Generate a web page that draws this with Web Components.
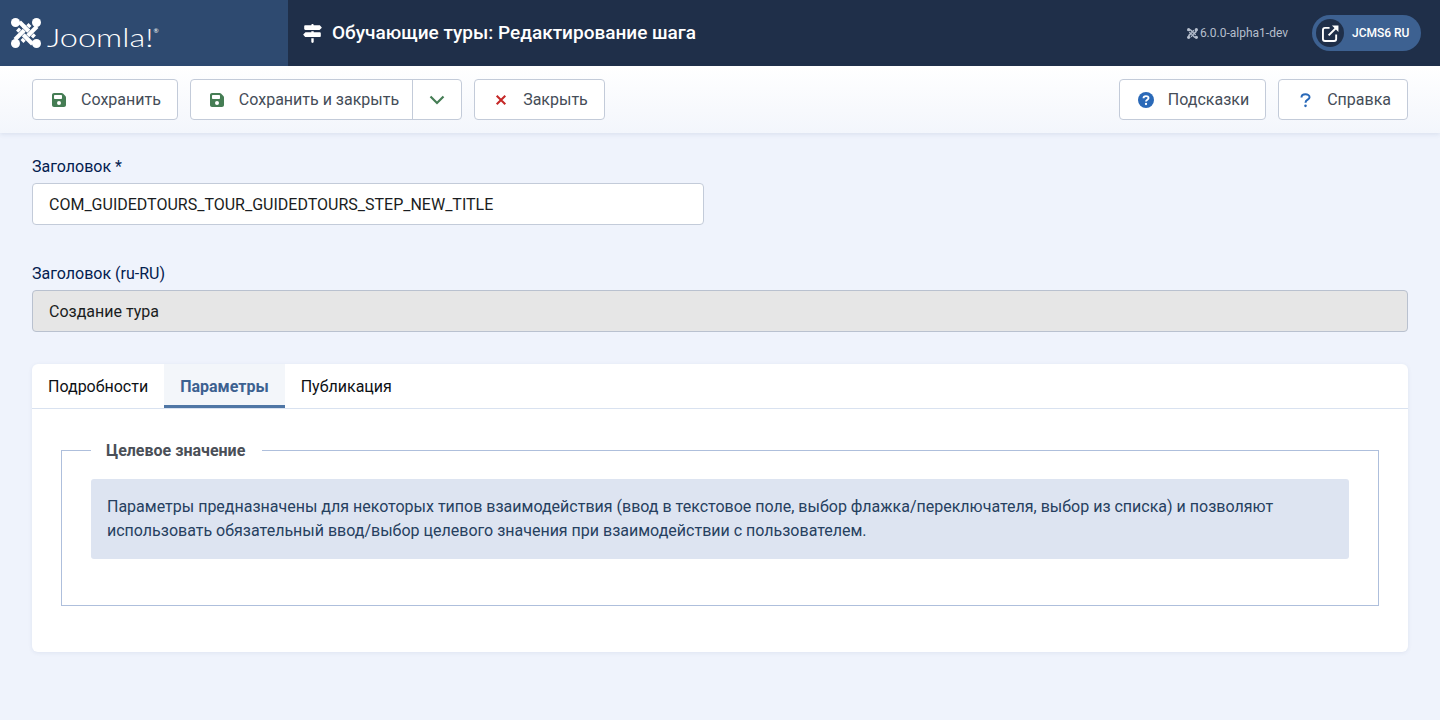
<!DOCTYPE html>
<html lang="ru">
<head>
<meta charset="utf-8">
<title>Обучающие туры</title>
<style>
  html, body { margin: 0; height: 100%; }
  body { background: #eff3fc; font-family: Roboto, "Liberation Sans", sans-serif; overflow: hidden; }
</style>
</head>
<body>

<template id="tpl-header">
  <style>
    :host { display: flex; height: 66px; background: #1f2f49; color: #fff; }
    .brand { width: 288px; box-sizing: border-box; padding: 0 0 0 11px; display: flex; align-items: center; background: #2e4a70; --knot-gap: #2e4a70; }
    .mark { width: 30px; height: 30px; flex: none; }
    .word { font-family: Lato, sans-serif; font-weight: 300; font-size: 26px; margin: 1px 0 0 6px; line-height: 30px; transform: scaleX(1.25); transform-origin: left; }
    .reg { font-size: 5px; vertical-align: 14px; font-weight: 400; }
    .title { flex: 1; display: flex; align-items: center; padding-left: 15px; }
    .sign { width: 19px; height: 19px; margin-right: 10px; }
    h1 { margin: 0; font-size: 19px; font-weight: 500; line-height: 24px; }
    .version { display: flex; align-items: center; font-size: 12px; color: #b6bfcd; margin-right: 24px; --knot-gap: #1f2f49; }
    .small { width: 11px; height: 11px; margin-right: 2px; }
    .pill { display: flex; align-items: center; height: 36px; width: 109px; box-sizing: border-box; margin: 15px 19px 0 0; padding-left: 4px; border-radius: 18px; background: #3d6191; font-size: 12px; font-weight: 500; }
    .circle { width: 28px; height: 28px; border-radius: 50%; background: #1f2f49; display: flex; align-items: center; justify-content: center; margin-right: 8px; }
    .ext { width: 17px; height: 17px; }
  </style>
  <div class="brand">
    <jm-icon class="mark" name="joomla"></jm-icon>
    <span class="word">Joomla!<span class="reg">®</span></span>
  </div>
  <div class="title"><jm-icon class="sign" name="post"></jm-icon><h1><slot></slot></h1></div>
  <div class="version"><jm-icon class="small" name="joomla"></jm-icon><slot name="version"></slot></div>
  <div class="pill"><span class="circle"><jm-icon class="ext" name="extlink"></jm-icon></span><slot name="site"></slot></div>
</template>

<template id="tpl-toolbar">
  <style>
    :host { display: flex; height: 67px; box-sizing: border-box; padding: 13px 32px 0; gap: 12px; background: linear-gradient(#fff, #f3f6fc); box-shadow: 0 1px 5px rgba(40, 70, 120, .12); position: relative; }
    .spacer { flex: 1; }
  </style>
  <slot name="left"></slot>
  <div class="spacer"></div>
  <slot name="right"></slot>
</template>

<template id="tpl-button">
  <style>
    :host { display: block; height: 41px; }
    .btn { display: flex; height: 41px; box-sizing: border-box; border: 1px solid #c3cbd9; border-radius: 4px; background: #fff; color: #454d58; font-size: 16px; line-height: 24px; }
    .main { display: flex; align-items: center; padding: 0 16px 0 18px; }
    .slot-ico { width: 16px; height: 16px; margin-right: 14px; display: flex; justify-content: center; align-items: center; color: var(--ico, #457d54); flex: none; }
    .slot-ico jm-icon { width: var(--ico-w, 14px); height: 16px; }
    .drop { display: none; width: 48px; border-left: 1px solid #c3cbd9; align-items: center; justify-content: center; color: #457d54; }
    .drop jm-icon { width: 16px; height: 10px; }
    :host([split]) .drop { display: flex; }
    :host([split]) .main { padding-right: 13px; }
  </style>
  <div class="btn">
    <div class="main"><span class="slot-ico"><jm-icon></jm-icon></span><slot></slot></div>
    <div class="drop"><jm-icon name="chev"></jm-icon></div>
  </div>
</template>

<template id="tpl-field">
  <style>
    :host { display: block; }
    label { display: block; font-size: 16px; line-height: 24px; color: #03204f; margin-bottom: 5px; position: relative; top: 1px; }
    .input { height: 42px; box-sizing: border-box; border: 1px solid #c3cbd9; border-radius: 4px; background: #fff; padding: 0 16px; display: flex; align-items: center; font-size: 16px; color: #1a1d21; }
    :host([readonly]) .input { background: #e6e6e6; border-color: #b9c1cf; }
  </style>
  <label></label>
  <div class="input"><slot></slot></div>
</template>

<template id="tpl-tabs">
  <style>
    :host { display: block; background: #fff; border-radius: 6px; box-shadow: 0 1px 4px rgba(40, 70, 120, .08); }
    .bar { display: flex; height: 45px; box-sizing: border-box; border-bottom: 1px solid #d9e2f0; }
    .panel { padding: 29px 29px 46px; }
  </style>
  <div class="bar"><slot name="tab"></slot></div>
  <div class="panel"><slot></slot></div>
</template>

<template id="tpl-tab">
  <style>
    :host { display: block; height: 44px; box-sizing: border-box; padding: 11px 16px 0; font-size: 16px; line-height: 24px; color: #0e1115; }
    :host([active]) { background: #f3f6fa; color: #3c6190; font-weight: 700; border-bottom: 3px solid #4f76a5; }
  </style>
  <slot></slot>
</template>

<template id="tpl-group">
  <style>
    :host { display: block; }
    fieldset { margin: 0; padding: 17px 29px 46px; border: 1px solid #aebfdc; }
    legend { padding: 1px 16px 0; height: 24px; box-sizing: content-box; margin-bottom: -1px; font-size: 16px; line-height: 24px; font-weight: 700; color: #4a4f57; position: relative; left: -1px; }
  </style>
  <fieldset><legend></legend><slot></slot></fieldset>
</template>

<template id="tpl-alert">
  <style>
    :host { display: block; background: #dde4f1; border-radius: 3px; padding: 16px; font-size: 16px; line-height: 24px; color: #26405f; }
  </style>
  <slot></slot>
</template>

<template id="tpl-page">
  <style>
    :host { display: block; padding: 21px 32px 0; }
    .stack { display: flex; flex-direction: column; }
    ::slotted(jm-field:nth-of-type(1)) { width: 672px; margin-bottom: 36px; }
    ::slotted(jm-field:nth-of-type(2)) { margin-bottom: 32px; }
  </style>
  <div class="stack"><slot></slot></div>
</template>

<jm-header>Обучающие туры: Редактирование шага
  <span slot="version">6.0.0-alpha1-dev</span>
  <span slot="site">JCMS6 RU</span>
</jm-header>

<jm-toolbar>
  <jm-button slot="left" icon="save">Сохранить</jm-button>
  <jm-button slot="left" icon="save" split>Сохранить и закрыть</jm-button>
  <jm-button slot="left" icon="xmark" color="#c52827" width="12px">Закрыть</jm-button>
  <jm-button slot="right" icon="circleq" color="#2a69b8" width="16px">Подсказки</jm-button>
  <jm-button slot="right" icon="quest" color="#2a69b8" width="11px">Справка</jm-button>
</jm-toolbar>

<jm-page>
  <jm-field label="Заголовок *">COM_GUIDEDTOURS_TOUR_GUIDEDTOURS_STEP_NEW_TITLE</jm-field>
  <jm-field label="Заголовок (ru-RU)" readonly>Создание тура</jm-field>
  <jm-tabs>
    <jm-tab slot="tab">Подробности</jm-tab>
    <jm-tab slot="tab" active>Параметры</jm-tab>
    <jm-tab slot="tab">Публикация</jm-tab>
    <jm-group legend="Целевое значение">
      <jm-alert>Параметры предназначены для некоторых типов взаимодействия (ввод в текстовое поле, выбор флажка/переключателя, выбор из списка) и позволяют использовать обязательный ввод/выбор целевого значения при взаимодействии с пользователем.</jm-alert>
    </jm-group>
  </jm-tabs>
</jm-page>

<script>
  // knot: four strands in a pinwheel, each with a dark casing so they look woven
  const STRAND = (d, w, c) => `<path d="${d}" fill="none" stroke="${c}" stroke-width="${w}"/>`;
  const GAP = 'var(--knot-gap, #2e4a70)';
  const KNOT_LINES = ['M17 8 L47 38', 'M52 17 L22 47', 'M43 52 L13 22', 'M8 43 L38 13'];
  const KNOT = KNOT_LINES.map(d => STRAND(d, 10, GAP) + STRAND(d, 8, 'currentColor')).join('')
    // the last strand goes under the first one
    + STRAND('M27 18 L33 24', 10, GAP) + STRAND('M25 16 L35 26', 8, 'currentColor');

  const ICONS = {
    joomla: `<svg viewBox="0 0 60 60">${KNOT}<g fill="currentColor">
        <circle cx="9" cy="9" r="9"/><circle cx="51" cy="9" r="9"/>
        <circle cx="9" cy="51" r="9"/><circle cx="51" cy="51" r="9"/>
      </g></svg>`,
    save: `<svg viewBox="0 0 448 512"><path fill="currentColor" d="M64 32C28.7 32 0 60.7 0 96V416c0 35.3 28.7 64 64 64H384c35.3 0 64-28.7 64-64V173.3c0-17-6.7-33.3-18.7-45.3L352 50.7C340 38.7 323.7 32 306.7 32H64zm0 96c0-17.7 14.3-32 32-32H288c17.7 0 32 14.3 32 32v64c0 17.7-14.3 32-32 32H96c-17.7 0-32-14.3-32-32V128zM224 288a64 64 0 1 1 0 128 64 64 0 1 1 0-128z"/></svg>`,
    post: `<svg viewBox="0 0 512 512"><path fill="currentColor" d="M224 32H64C46.3 32 32 46.3 32 64v64c0 17.7 14.3 32 32 32H441.4c4.2 0 8.3-1.7 11.3-4.7l48-48c6.2-6.2 6.2-16.4 0-22.6l-48-48c-3-3-7.1-4.7-11.3-4.7H288c0-17.7-14.3-32-32-32s-32 14.3-32 32zM480 256c0-17.7-14.3-32-32-32H288V192H224v32H70.6c-4.2 0-8.3 1.7-11.3 4.7l-48 48c-6.2 6.2-6.2 16.4 0 22.6l48 48c3 3 7.1 4.7 11.3 4.7H448c17.7 0 32-14.3 32-32V256zM288 480V384H224v96c0 17.7 14.3 32 32 32s32-14.3 32-32z"/></svg>`,
    xmark: `<svg viewBox="0 0 14 14"><path fill="none" stroke="currentColor" stroke-width="2.4" d="M2 2 L12 12 M12 2 L2 12"/></svg>`,
    chev: `<svg viewBox="0 0 16 10"><path fill="none" stroke="currentColor" stroke-width="2.2" d="M1.5 1.5 L8 8 L14.5 1.5"/></svg>`,
    circleq: `<svg viewBox="0 0 16 16"><circle cx="8" cy="8" r="8" fill="currentColor"/><path fill="none" stroke="#fff" stroke-width="1.9" d="M5.5 6.3 C5.5 3.4 10.5 3.4 10.5 6 C10.5 7.8 8 7.6 8 9.6"/><circle cx="8" cy="12" r="1.15" fill="#fff"/></svg>`,
    quest: `<svg viewBox="0 0 12 16"><path fill="none" stroke="currentColor" stroke-width="2.2" d="M1.6 5.2 C1.6 0.6 10.4 0.6 10.4 5 C10.4 7.8 6 7.6 6 11"/><circle cx="6" cy="14.4" r="1.4" fill="currentColor"/></svg>`,
    extlink: `<svg viewBox="0 0 18 18"><path fill="none" stroke="currentColor" stroke-width="2" d="M8 3 H3.2 C2 3 1 4 1 5.2 V14.8 C1 16 2 17 3.2 17 H12.8 C14 17 15 16 15 14.8 V10"/><path fill="none" stroke="currentColor" stroke-width="2.2" d="M7 11 L15.5 2.5"/><path fill="currentColor" d="M10.5 0.6 H17.4 V7.5 Z"/></svg>`
  };

  class JmBase extends HTMLElement {
    constructor() {
      super();
      let tpl = document.getElementById(this.constructor.tpl);
      this.attachShadow({ mode: 'open' }).appendChild(tpl.content.cloneNode(true));
    }
  }

  function simple(name, tpl) {
    customElements.define(name, class extends JmBase { static get tpl() { return tpl; } });
  }

  customElements.define('jm-icon', class extends HTMLElement {
    static get observedAttributes() { return ['name']; }
    constructor() {
      super();
      this.attachShadow({ mode: 'open' });
    }
    attributeChangedCallback() {
      this.shadowRoot.innerHTML = '<style>:host{display:block}svg{display:block;width:100%;height:100%}</style>' + (ICONS[this.getAttribute('name')] || '');
    }
  });

  simple('jm-header', 'tpl-header');
  simple('jm-toolbar', 'tpl-toolbar');
  simple('jm-tabs', 'tpl-tabs');
  simple('jm-tab', 'tpl-tab');
  simple('jm-alert', 'tpl-alert');
  simple('jm-page', 'tpl-page');

  customElements.define('jm-button', class extends JmBase {
    static get tpl() { return 'tpl-button'; }
    connectedCallback() {
      let ico = this.shadowRoot.querySelector('.slot-ico');
      ico.querySelector('jm-icon').setAttribute('name', this.getAttribute('icon'));
      if (this.hasAttribute('color')) ico.style.setProperty('--ico', this.getAttribute('color'));
      if (this.hasAttribute('width')) ico.style.setProperty('--ico-w', this.getAttribute('width'));
    }
  });

  customElements.define('jm-field', class extends JmBase {
    static get tpl() { return 'tpl-field'; }
    connectedCallback() {
      this.shadowRoot.querySelector('label').textContent = this.getAttribute('label');
    }
  });

  customElements.define('jm-group', class extends JmBase {
    static get tpl() { return 'tpl-group'; }
    connectedCallback() {
      this.shadowRoot.querySelector('legend').textContent = this.getAttribute('legend');
    }
  });
</script>
</body>
</html>
